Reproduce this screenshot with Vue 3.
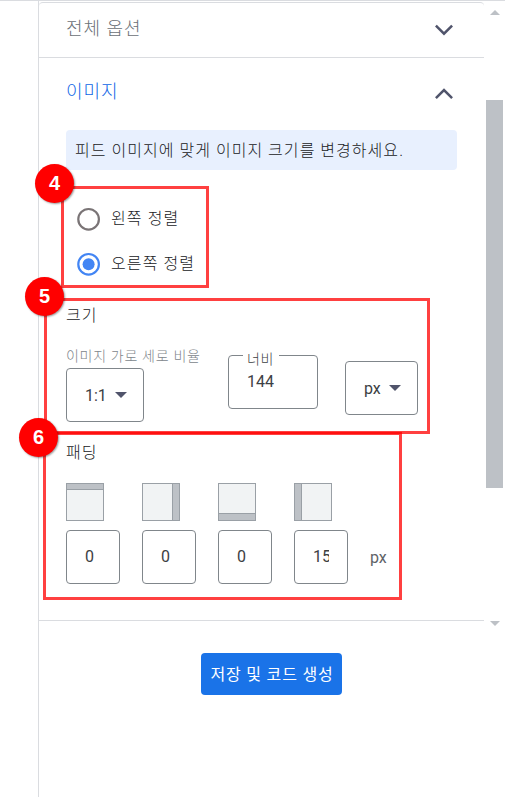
<script setup>
import { ref } from 'vue'

const align = ref('right')
const alignments = [
  { value: 'left', label: '왼쪽 정렬' },
  { value: 'right', label: '오른쪽 정렬' }
]

const paddings = ref([
  { side: 'top', value: '0' },
  { side: 'right', value: '0' },
  { side: 'bottom', value: '0' },
  { side: 'left', value: '15' }
])
</script>

<template>
  <div class="page">
    <div class="panel">
      <div class="options">
        <div class="section-header collapsed">
          <span class="section-title">전체 옵션</span>
          <svg class="chevron" width="20" height="12" viewBox="0 0 20 12">
            <path d="M1.9 1.6 L10 9.7 L18.1 1.6" />
          </svg>
        </div>

        <div class="section">
          <div class="section-header open">
            <span class="section-title">이미지</span>
            <svg class="chevron" width="20" height="12" viewBox="0 0 20 12">
              <path d="M1.9 10.2 L10 2.1 L18.1 10.2" />
            </svg>
          </div>

          <div class="hint"><span>피드 이미지에 맞게 이미지 크기를 변경하세요.</span></div>

          <div class="radios">
            <div v-for="a in alignments" :key="a.value" class="radio" @click="align = a.value">
              <svg :class="['radio-icon', { checked: align === a.value }]" width="24" height="24" viewBox="0 0 24 24">
                <circle class="ring" cx="11.6" cy="12.3" r="10.3" />
                <circle v-if="align === a.value" class="dot" cx="11.6" cy="12.3" r="6" />
              </svg>
              <span>{{ a.label }}</span>
            </div>
          </div>

          <div class="subtitle size-title">크기</div>
          <div class="size-row">
            <div class="ratio">
              <div class="ratio-label">이미지 가로 세로 비율</div>
              <div class="box select">
                <span>1:1</span>
                <svg width="12" height="6" viewBox="0 0 12 6"><path d="M0 0H12L6 6Z" /></svg>
              </div>
            </div>
            <fieldset class="width-field">
              <legend>너비</legend>
              <span>144</span>
            </fieldset>
            <div class="box select unit">
              <span>px</span>
              <svg width="12" height="6" viewBox="0 0 12 6"><path d="M0 0H12L6 6Z" /></svg>
            </div>
          </div>

          <div class="subtitle padding-title">패딩</div>
          <div class="padding-row">
            <div v-for="p in paddings" :key="p.side" class="padding-item">
              <div :class="['side-icon', p.side]"><i></i></div>
              <div class="box number"><span>{{ p.value }}</span></div>
            </div>
            <span class="px">px</span>
          </div>
        </div>
      </div>

      <div class="footer">
        <button class="save">저장 및 코드 생성</button>
      </div>
    </div>

    <div class="scrollbar">
      <svg class="arrow" width="10" height="5" viewBox="0 0 10 5"><path d="M0 5H10L5 0Z" /></svg>
      <div class="thumb"></div>
      <svg class="arrow" width="10" height="5" viewBox="0 0 10 5"><path d="M0 0H10L5 5Z" /></svg>
    </div>

    <div class="mark mark-4"></div>
    <div class="mark mark-5"></div>
    <div class="mark mark-6"></div>
    <div class="badge badge-4">4</div>
    <div class="badge badge-5">5</div>
    <div class="badge badge-6">6</div>
  </div>
</template>

<style>
body {
  margin: 0;
  background: #fff;
}
</style>

<style scoped>
.page {
  position: relative;
  box-sizing: border-box;
  display: flex;
  width: 505px;
  height: 797px;
  padding-left: 38px;
  overflow: hidden;
  border-top: 1px solid #dadce0;
  background: #fff;
  color: #3c4043;
  font-family: Roboto, "Noto Sans CJK KR", sans-serif;
  font-size: 16px;
}

.page * {
  box-sizing: border-box;
}

.panel {
  width: 446px;
  border-left: 1px solid #dadce0;
}

.options {
  height: 619px;
  margin-top: 1px;
  border-top: 1px solid #dadce0;
  border-bottom: 1px solid #dadce0;
  border-radius: 4px 4px 0 0;
}

.section-header {
  display: flex;
  align-items: center;
  justify-content: space-between;
  padding: 0 30px 0 27px;
}

.collapsed {
  height: 55px;
  padding-bottom: 3px;
  border-bottom: 1px solid #dadce0;
  color: #6b7076;
}

.collapsed .chevron {
  margin-top: 3px;
}

.open {
  height: 72px;
  padding-bottom: 5px;
  color: #0f66e6;
}

.open .chevron {
  margin-top: 4px;
}

.section-title {
  font-size: 18px;
  font-weight: 300;
  line-height: 24px;
  letter-spacing: 1px;
}

.chevron path {
  fill: none;
  stroke: #50546b;
  stroke-width: 2.5;
}

.hint {
  display: flex;
  align-items: center;
  width: 391px;
  height: 40px;
  margin-left: 27px;
  padding: 0 0 3px 9px;
  border-radius: 4px;
  background: #e8f0fe;
  color: #202124;
  font-weight: 300;
  white-space: nowrap;
  letter-spacing: 1.04px;
}

.radios {
  display: flex;
  flex-direction: column;
  gap: 21px;
  padding: 37px 0 0 38px;
}

.radio {
  display: flex;
  align-items: center;
  gap: 10px;
  height: 24px;
}

.radio span {
  margin-top: -4px;
  color: #202124;
  font-weight: 300;
  letter-spacing: 1.1px;
}

.ring {
  fill: none;
  stroke: #7a7476;
  stroke-width: 2.2;
}

.checked .ring {
  stroke: #4285f4;
}

.dot {
  fill: #4285f4;
}

.subtitle {
  padding-left: 27px;
  color: #202124;
  font-weight: 300;
  line-height: 24px;
  letter-spacing: 1px;
}

.size-title {
  margin-top: 28px;
}

.size-row {
  display: flex;
  padding: 19px 0 0 27px;
}

.ratio {
  width: 162px;
}

.ratio-label {
  height: 21px;
  color: #80868b;
  font-size: 14px;
  font-weight: 300;
  line-height: 18px;
  letter-spacing: 0.7px;
}

.box {
  display: flex;
  align-items: center;
  height: 54px;
  border: 1px solid #80868b;
  border-radius: 4px;
}

.select {
  gap: 8px;
  width: 78px;
  padding-left: 18px;
}

.select span {
  margin-top: 1px;
}

.select path {
  fill: #50546b;
}

.width-field {
  width: 90px;
  height: 62px;
  min-width: 0;
  margin: 0;
  padding: 0 0 0 14px;
  border: 1px solid #80868b;
  border-radius: 4px;
}

.width-field legend {
  height: 16px;
  padding: 0 5px 0 4px;
  color: #3c4043;
  font-size: 14px;
  font-weight: 300;
  line-height: 24px;
  letter-spacing: 0.5px;
}

.width-field span {
  display: block;
  padding-left: 4px;
  line-height: 20px;
  margin-top: 9px;
}

.unit {
  width: 73px;
  margin: 14px 0 0 27px;
}

.padding-title {
  margin-top: 19px;
}

.padding-row {
  display: flex;
  gap: 22px;
  padding: 18px 0 0 27px;
}

.side-icon {
  display: flex;
  width: 38px;
  height: 38px;
  margin-bottom: 9px;
  border: 1px solid #9aa0a6;
  background: #f1f3f4;
}

.side-icon i {
  background: #bdc1c6;
}

.top i {
  width: 36px;
  height: 6px;
  border-bottom: 1px solid #9aa0a6;
}

.right {
  justify-content: flex-end;
}

.right i {
  width: 7px;
  border-left: 1px solid #9aa0a6;
}

.bottom {
  align-items: flex-end;
}

.bottom i {
  width: 36px;
  height: 7px;
  border-top: 1px solid #9aa0a6;
}

.left i {
  width: 7px;
  border-right: 1px solid #9aa0a6;
}

.number {
  width: 54px;
  padding: 0 18px 1px;
  font-size: 16px;
}

.number span {
  overflow: hidden;
  white-space: nowrap;
}

.px {
  margin-top: 65px;
  color: #5f6368;
  line-height: 20px;
}

.footer {
  display: flex;
  justify-content: center;
  padding: 32px 0 0 20px;
}

.save {
  width: 141px;
  height: 42px;
  padding: 0 0 2px 1px;
  border: 0;
  border-radius: 4px;
  background: #1a73e8;
  color: #fff;
  font: inherit;
  letter-spacing: 0.8px;
  white-space: nowrap;
}

.scrollbar {
  display: flex;
  flex-direction: column;
  align-items: center;
  width: 21px;
  height: 626px;
  padding-top: 9px;
}

.arrow {
  flex: none;
  fill: #bdc1c6;
}

.thumb {
  width: 17px;
  height: 388px;
  margin: 85px 0 133px;
  background: #bdc1c6;
}

.mark {
  position: absolute;
  border: 3px solid rgba(255, 0, 0, 0.75);
}

.mark-4 {
  left: 61px;
  top: 185px;
  width: 148px;
  height: 102px;
}

.mark-5 {
  left: 44px;
  top: 297px;
  width: 386px;
  height: 136px;
}

.mark-6 {
  left: 43px;
  top: 431px;
  width: 359px;
  height: 168px;
}

.badge {
  position: absolute;
  width: 39px;
  height: 39px;
  border-radius: 50%;
  background: #f00;
  box-shadow: 1px 1px 2px rgba(0, 0, 0, 0.4);
  color: #fff;
  font-family: "Liberation Sans", Arial, sans-serif;
  font-size: 20px;
  font-weight: bold;
  line-height: 39px;
  text-align: center;
}

.badge-4 {
  left: 35px;
  top: 163px;
}

.badge-5 {
  left: 25px;
  top: 276px;
}

.badge-6 {
  left: 19px;
  top: 417px;
}
</style>
